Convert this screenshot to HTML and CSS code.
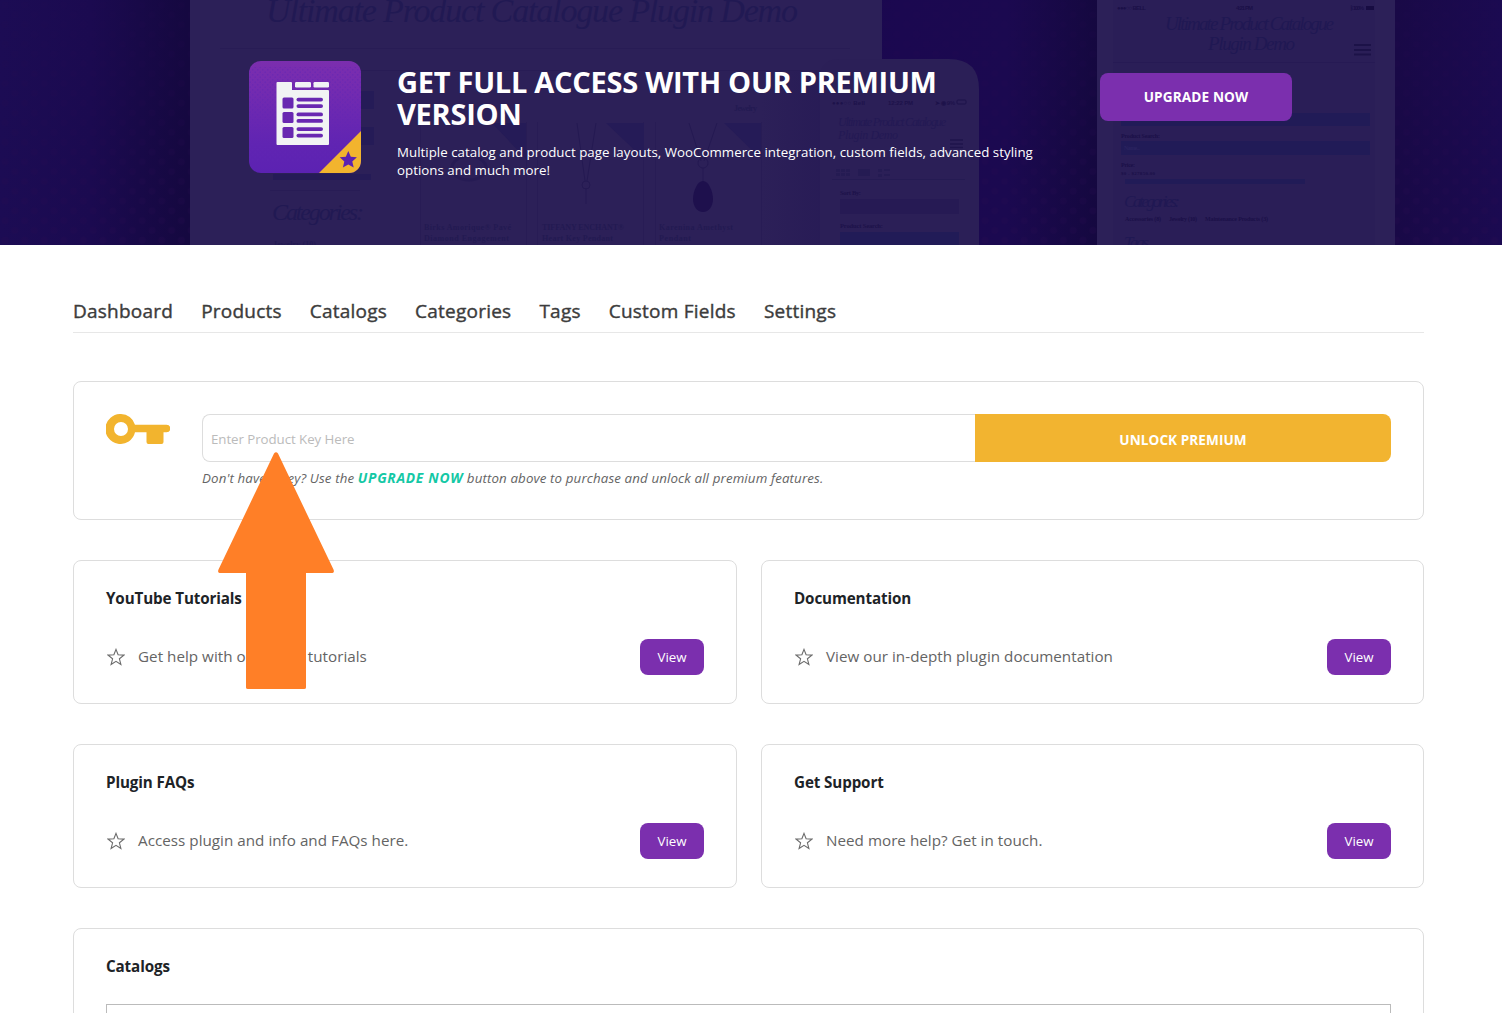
FILE: index.html
```html
<!DOCTYPE html>
<html lang="en">
<head>
<meta charset="utf-8">
<title>Ultimate Product Catalog</title>
<link rel="stylesheet" href="styles.css">
</head>
<body>
<header class="hero">
  <svg class="hero-bg" viewBox="0 0 1502 245" aria-hidden="true">
    <defs>
      <pattern id="dots" width="19.6" height="19.6" patternUnits="userSpaceOnUse"><circle cx="5" cy="5" r="3.6"/><circle cx="14.8" cy="14.8" r="3.6"/></pattern>
      <linearGradient id="night"><stop offset="0" stop-color="#1c0c54"/><stop offset=".06" stop-color="#1b0a50"/><stop offset=".125" stop-color="#150840"/><stop offset=".6" stop-color="#1b0850"/><stop offset=".67" stop-color="#1b0950"/><stop offset=".73" stop-color="#150840"/><stop offset=".93" stop-color="#190947"/><stop offset="1" stop-color="#1b0a51"/></linearGradient>
      <linearGradient id="panelShade"><stop offset="0" stop-color="#241754" stop-opacity="0"/><stop offset="1" stop-color="#241754" stop-opacity=".5"/></linearGradient>
      <linearGradient id="dotFade" x1="0" y1="0" x2="0" y2="1"><stop offset="0" stop-color="#fff" stop-opacity=".35"/><stop offset="1" stop-color="#fff"/></linearGradient>
      <mask id="dotMask"><rect width="1502" height="245" fill="url(#dotFade)"/></mask>
    </defs>
    <rect width="1502" height="245" fill="url(#night)"/>
    <rect class="bg-dots" width="1502" height="245" fill="url(#dots)" mask="url(#dotMask)"/>
    <rect x="190" width="692" height="245" fill="#2c2058"/>
    <rect x="760" y="70" width="61" height="175" fill="url(#panelShade)"/>
    <g stroke="#281c55"><path d="M220 48.500H850M360 70.500H822M420.500 122V245M526.500 122V245M537.500 122V245M643.500 122V245M655.500 122V245M761.500 122V245M270 190.500H360"/></g>
    <g fill="#251b57"><rect x="270" y="91" width="104" height="18"/><rect x="270" y="127" width="104" height="18"/><rect x="273" y="174" width="98" height="6"/><path d="M492 123h34v36zM606 123h38v36zM724 123h37v36z"/></g>
    <g fill="#211953" class="bg-script"><text x="266" y="22" font-size="34" textLength="532">Ultimate Product Catalogue Plugin Demo</text><text x="272" y="220" font-size="24" textLength="92">Categories:</text></g>
    <g fill="#231a52" class="bg-serif"><text x="734" y="111" font-size="8" textLength="23">Jewelry</text><text x="424" y="230" font-size="8" textLength="87">Birks Amorique® Pavé</text><text x="424" y="241" font-size="8" textLength="85">Diamond Engagement</text><text x="542" y="230" font-size="8" textLength="82">TIFFANY ENCHANT®</text><text x="542" y="241" font-size="8" textLength="71">Heart Key Pendant</text><text x="659" y="230" font-size="8" textLength="74">Karenina Amethyst</text><text x="659" y="241" font-size="8" textLength="32">Pendant</text><text x="273" y="247" font-size="8" textLength="43">Jewelry (10)</text></g>
    <g fill="none" stroke="#241952"><path d="M577 123l8 58M596 123l-9 58M586 188v16M689 123l12 38M717 123l-13 38"/><circle cx="586" cy="185" r="4"/><circle cx="703" cy="163" r="5"/><path d="M703 168v13"/><ellipse cx="469" cy="168" rx="17" ry="12" stroke-width="3" opacity=".7"/></g>
    <path d="M703 181c6 0 10 11 10 18s-4 13-10 13-10-6-10-13 4-18 10-18z" fill="#1e104d"/>

    <path d="M820 245V79q0-20 20-20H949q30 0 30 30V245z" fill="#2b1f57"/>
    <g fill="#1d124a" class="bg-sans"><text x="832" y="105" font-size="6" textLength="33">●●●○○ Bell</text><text x="888" y="105" font-size="6" textLength="25">12:22 PM</text><text x="935" y="105" font-size="6" textLength="20">➤ ◉ 9%</text></g>
    <rect x="957" y="100" width="9" height="4" rx="1" fill="none" stroke="#1d124a"/>
    <g fill="#231954" class="bg-script"><text x="838" y="126" font-size="12" textLength="108">Ultimate Product Catalogue</text><text x="838" y="139" font-size="12" textLength="60">Plugin Demo</text></g>
    <path d="M950 140h13M950 144h13M950 147.500h13" stroke="#1f144c" stroke-width="1.500"/>
    <g fill="#251b53"><path d="M836 169h4v3h-4zm5 0h4v3h-4zm5 0h4v3h-4zm-10 4h4v3h-4zm5 0h4v3h-4zm5 0h4v3h-4zm12-4h12v7h-12zm20 0h4v3h-4zm6 0h6v2h-6zm-6 5h4v3h-4zm6 0h6v2h-6z"/><path d="M832 179h133v1H832z"/></g>
    <g fill="#1d124a" class="bg-serif"><text x="840" y="195" font-size="6.500" textLength="21">Sort By:</text><text x="840" y="228" font-size="6.500" textLength="43">Product Search:</text></g>
    <rect x="840" y="199" width="119" height="15" fill="#261a54"/><rect x="840" y="232" width="119" height="13" fill="#211b57"/>

    <rect x="1097" width="298" height="245" fill="#2c2058"/><rect x="1113" width="262" height="245" fill="#2a1e57"/>
    <g fill="#1b1048" class="bg-sans"><text x="1117" y="10" font-size="6" textLength="29">●●●○○ BELL</text><text x="1236" y="10" font-size="6" textLength="17">4:21 PM</text><text x="1350" y="10" font-size="6" textLength="14">ᛒ 100%</text></g>
    <rect x="1366" y="6" width="8" height="4" fill="#170c42"/>
    <g fill="#201853" class="bg-script"><text x="1165" y="30" font-size="19" textLength="169">Ultimate Product Catalogue</text><text x="1208" y="50" font-size="19" textLength="87">Plugin Demo</text><text x="1124" y="207" font-size="17" textLength="56">Categories:</text><text x="1124" y="248" font-size="17" textLength="25">Tags</text></g>
    <path d="M1354 45h17M1354 50h17M1354 54.500h17" stroke="#1c1248" stroke-width="2"/>
    <path d="M1113 62.500H1375" stroke="#261a54"/>
    <g fill="#211b57"><rect x="1121" y="113" width="249" height="13"/><rect x="1121" y="141" width="249" height="14"/><rect x="1125" y="179" width="180" height="5"/></g>
    <g fill="#1b1048" class="bg-serif"><text x="1121" y="138" font-size="6" textLength="39">Product Search:</text><text x="1124" y="150" font-size="6" textLength="16" fill="#2a2360">Name...</text><text x="1121" y="167" font-size="6" textLength="14">Price:</text><text x="1121" y="175" font-size="5" textLength="34">$0 - $27850.00</text><text x="1125" y="221" font-size="6" textLength="36">Accessories (8)</text><text x="1169" y="221" font-size="6" textLength="28">Jewelry (10)</text><text x="1205" y="221" font-size="6" textLength="63">Maintenance Products (3)</text></g>
  </svg>
  <div class="hero-inner">
    <svg class="logo" viewBox="0 0 112 112" aria-hidden="true">
      <defs><linearGradient id="logoFill" x1="0" y1="0" x2="0" y2="1"><stop offset="0" stop-color="#7b2eae"/><stop offset=".25" stop-color="#742bb0"/><stop offset=".75" stop-color="#6024b2"/><stop offset="1" stop-color="#5c22b2"/></linearGradient>
      <pattern id="logoDots" width="5" height="5" patternUnits="userSpaceOnUse"><circle cx="1.250" cy="1.250" r=".9"/><circle cx="3.750" cy="3.750" r=".9"/></pattern>
      <clipPath id="logoClip"><rect width="112" height="112" rx="12"/></clipPath></defs>
      <g clip-path="url(#logoClip)"><rect width="112" height="112" fill="url(#logoFill)"/><rect y="6" width="112" height="94" fill="url(#logoDots)" class="logo-dots"/><path d="M112 70v42H70z" fill="#f2b42e"/></g>
      <path fill="#f1f3f4" d="M28.500 21H42a1 1 0 0 1 1 1v7H79a1 1 0 0 1 1 1V83a1 1 0 0 1-1 1H28.500a1 1 0 0 1-1-1V22a1 1 0 0 1 1-1z"/>
      <g fill="#f1f3f4"><rect x="46" y="21" width="16" height="5.500" rx="1.200"/><rect x="64.500" y="21" width="15.500" height="5.500" rx="1.200"/></g>
      <g fill="#6828b1"><rect x="33.500" y="36.500" width="11" height="11" rx="1.500"/><rect x="33.500" y="51" width="11" height="11" rx="1.500"/><rect x="33.500" y="66" width="11" height="11" rx="1.500"/><rect x="47.500" y="36.700" width="26.500" height="3.800" rx="1.900"/><rect x="47.500" y="43.200" width="26.500" height="3.800" rx="1.900"/><rect x="47.500" y="51.500" width="26.500" height="3.800" rx="1.900"/><rect x="47.500" y="58" width="26.500" height="3.800" rx="1.900"/><rect x="47.500" y="66.200" width="26.500" height="3.800" rx="1.900"/><rect x="47.500" y="72.700" width="26.500" height="3.800" rx="1.900"/></g>
      <path fill="#5c22b2" d="M99.300 90l2.500 5.700 6.100.6-4.600 4.100 1.400 6.200-5.400-3.200-5.400 3.200 1.400-6.200-4.600-4.100 6.100-.6z"/>
    </svg>
    <div class="hero-copy">
      <h1>GET FULL ACCESS WITH OUR PREMIUM<br>VERSION</h1>
      <p>Multiple catalog and product page layouts, WooCommerce integration, custom fields, advanced styling<br>options and much more!</p>
    </div>
    <a class="upgrade">UPGRADE NOW</a>
  </div>
</header>

<main class="page">
  <nav class="tabs"><a>Dashboard</a><a>Products</a><a>Catalogs</a><a>Categories</a><a>Tags</a><a>Custom Fields</a><a>Settings</a></nav>

  <section class="card key-card">
    <svg class="key" viewBox="0 0 64 30" aria-hidden="true"><path fill="#f2b42e" fill-rule="evenodd" d="M15 0a15 15 0 0 1 14 10.700H60.500a3.700 3.700 0 0 1 0 7.600H57.500V28a2 2 0 0 1-2 2H42.500a2 2 0 0 1-2-2V18.300H29A15 15 0 1 1 15 0zm0 8a7 7 0 1 0 0 14 7 7 0 0 0 0-14z"/></svg>
    <div class="key-main">
      <form class="key-form"><input type="text" placeholder="Enter Product Key Here" aria-label="Product key"><button type="button">UNLOCK PREMIUM</button></form>
      <p>Don't have a key? Use the <b>UPGRADE NOW</b> button above to purchase and unlock all premium features.</p>
    </div>
  </section>

  <svg class="symbols" aria-hidden="true"><symbol id="star" viewBox="0 0 18 18"><path fill="none" stroke="#6b6b6b" stroke-width="1.100" stroke-linejoin="miter" d="M9 1.400l2.100 5.400 5.800.3-4.500 3.700 1.500 5.700L9 13.300l-4.900 3.200 1.500-5.700L1.100 7.100l5.800-.3z"/></symbol></svg>

  <div class="help-grid">
    <section class="card help"><h2>YouTube Tutorials</h2><div class="row"><svg class="star"><use href="#star"/></svg><span>Get help with our video tutorials</span><a class="view">View</a></div></section>
    <section class="card help"><h2>Documentation</h2><div class="row"><svg class="star"><use href="#star"/></svg><span>View our in-depth plugin documentation</span><a class="view">View</a></div></section>
    <section class="card help"><h2>Plugin FAQs</h2><div class="row"><svg class="star"><use href="#star"/></svg><span>Access plugin and info and FAQs here.</span><a class="view">View</a></div></section>
    <section class="card help"><h2>Get Support</h2><div class="row"><svg class="star"><use href="#star"/></svg><span>Need more help? Get in touch.</span><a class="view">View</a></div></section>
  </div>

  <section class="card catalogs"><h2>Catalogs</h2><div class="table"></div></section>
</main>

<svg class="pointer" viewBox="0 0 116 238" aria-hidden="true"><path fill="#ff7f27" d="M56 1.500Q58 -1 60 1.500L115.500 117.500Q117 121 113 121H88V235.500Q88 237 86 237H30Q28 237 28 235.500V121H3Q-1 121 .5 117.500z"/></svg>
</body>
</html>
```
FILE: styles.css
```css
* { box-sizing: border-box; }
body { margin: 0; height: 1013px; overflow: hidden; position: relative; background: #fff; font-family: "Open Sans", "Noto Sans", sans-serif; color: #646464; }
h1, h2, p { margin: 0; }

.hero { position: relative; height: 245px; overflow: hidden; }
.hero-bg { position: absolute; inset: 0; width: 1502px; height: 245px; }
.bg-dots { opacity: .25; }
#dots circle { fill: #2b0e52; }
.bg-script { font-family: "Liberation Serif", serif; font-style: italic; }
.bg-serif { font-family: "Liberation Serif", serif; font-weight: 700; }
.bg-sans { font-family: "Liberation Sans", sans-serif; font-weight: 700; }
.hero-inner { position: relative; display: flex; align-items: flex-start; width: 1043px; margin-left: 249px; padding-top: 61px; }
.logo { width: 112px; height: 112px; flex: none; }
#logoDots circle { fill: #6025b4; }
.logo-dots { opacity: .5; }
.hero-copy { flex: 1; margin-left: 36px; padding-top: 5px; color: #fff; white-space: nowrap; }
.hero-copy h1 { font-size: 29px; line-height: 32px; font-weight: 700; letter-spacing: -.26px; }
.hero-copy p { margin-top: 13px; font-size: 13.3px; line-height: 18px; letter-spacing: .025px; }
.upgrade { width: 192px; height: 48px; margin-top: 12px; border-radius: 8px; background: #7b2fae; color: #fff; font-size: 13.6px; font-weight: 700; line-height: 48px; text-align: center; letter-spacing: .12px; }

.page { width: 1351px; margin-left: 73px; padding-top: 47px; }
.tabs { display: flex; gap: 28px; height: 41px; border-bottom: 1px solid #e7e7e7; color: #3c3c3c; font-size: 19px; line-height: 38px; letter-spacing: .23px; -webkit-text-stroke: .4px #3c3c3c; white-space: nowrap; }
.card { border: 1px solid #ddd; border-radius: 8px; padding: 32px; background: #fff; }
.key-card { display: flex; height: 139px; margin-top: 48px; }
.key { width: 64px; height: 30px; flex: none; }
.key-main { flex: 1; margin-left: 32px; }
.key-form { display: flex; height: 48px; }
.key-form input { width: 773px; border: 1px solid #ddd; border-right: 0; border-radius: 8px 0 0 8px; padding: 2px 8px 0; font: 13.3px "Open Sans", sans-serif; letter-spacing: -.06px; background: #fff; }
.key-form input::placeholder { color: #bbb; opacity: 1; }
.key-form button { flex: 1; border: 0; border-radius: 0 8px 8px 0; background: #f2b430; color: #fff; font: 700 13.6px "Open Sans", sans-serif; letter-spacing: .05px; padding: 2px 0 0; }
.key-main p { margin-top: 7px; font-size: 13.3px; line-height: 18px; font-style: italic; letter-spacing: .13px; white-space: nowrap; }
.key-main b { color: #14c8a5; font-size: 13.8px; letter-spacing: .7px; }
.symbols { display: none; }

.help-grid { display: grid; grid-template-columns: 664px 663px; gap: 40px 24px; margin-top: 40px; }
.help { height: 144px; }
h2 { color: #1d2327; font-size: 15.2px; font-weight: 700; line-height: 22px; margin-top: -6px; letter-spacing: -.12px; }
.row { display: flex; align-items: center; height: 36px; margin-top: 30px; font-size: 15.2px; }
.star { width: 18px; height: 18px; margin: 0 13px 0 1px; }
.row span { flex: 1; padding-bottom: 2px; white-space: nowrap; letter-spacing: .03px; }
.view { width: 64px; height: 36px; border-radius: 8px; background: #7b2fae; color: #fff; font-size: 13.3px; line-height: 36px; text-align: center; }
.catalogs { height: 200px; margin-top: 40px; }
.table { height: 100px; margin-top: 27px; border: 1px solid #bbb; }
.pointer { position: absolute; left: 218px; top: 452px; width: 116px; height: 238px; }
```
